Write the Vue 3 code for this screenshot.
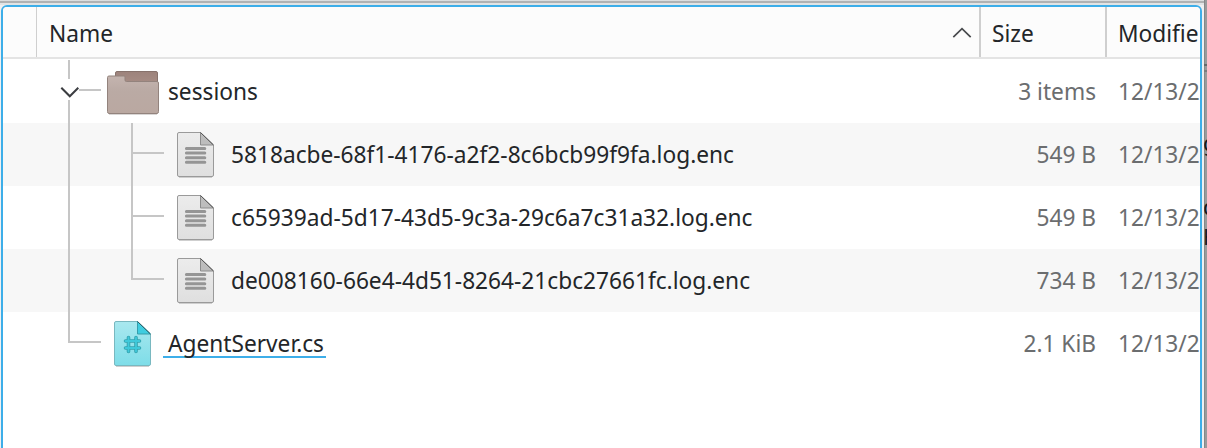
<script setup>
const rows = [
  { kind: 'folder', name: 'sessions', size: '3 items' },
  { kind: 'text', name: '5818acbe-68f1-4176-a2f2-8c6bcb99f9fa.log.enc', size: '549 B' },
  { kind: 'text', name: 'c65939ad-5d17-43d5-9c3a-29c6a7c31a32.log.enc', size: '549 B' },
  { kind: 'text', name: 'de008160-66e4-4d51-8264-21cbc27661fc.log.enc', size: '734 B', last: true },
  { kind: 'code', name: 'AgentServer.cs', size: '2.1 KiB' },
]
</script>

<template>
  <div class="window">
    <main class="panel">
      <header class="head">
        <div class="cell gutter"></div>
        <div class="cell name-head">
          <span>Name</span>
          <svg class="sort" width="20" height="12" viewBox="0 0 20 12"><path d="M1.3 10.2 10 1.6l8.7 8.6" /></svg>
        </div>
        <div class="cell size-head">Size</div>
        <div class="cell mod-head">Modifie</div>
      </header>
      <section class="rows">
        <div v-for="row in rows" :key="row.name" class="row" :class="row.kind">
          <svg v-if="row.kind === 'folder'" class="tree" width="104" height="63">
            <path class="line" d="M66 0v19M66 40v23M76 30h22" />
            <path class="chevron" d="M58.3 27.8 66.8 36.3l8.5-8.5" />
          </svg>
          <svg v-else-if="row.kind === 'text'" class="tree" width="174" height="63">
            <path class="line" d="M66 0v63" />
            <path class="line" :d="row.last ? 'M129 0v30h32' : 'M129 0v63M130 30h31'" />
          </svg>
          <svg v-else class="tree" width="111" height="63">
            <path class="line" d="M66 0v30h32" />
          </svg>

          <svg v-if="row.kind === 'folder'" class="icon" width="61" height="63">
            <defs>
              <linearGradient id="front" x2="0" y2="1"><stop stop-color="#c4b4af" /><stop offset=".4" stop-color="#baaaa4" /><stop offset="1" stop-color="#baa8a1" /></linearGradient>
              <linearGradient id="back" x2="0" y2="1"><stop stop-color="#9d837c" /><stop offset="1" stop-color="#a78d85" /></linearGradient>
            </defs>
            <path d="M2 54.2h48" stroke="#c9c4c2" stroke-width="1" />
            <path d="M8.5 22V13Q8.5 11.5 10 11.5H49Q50.5 11.5 50.5 13V24z" fill="url(#back)" stroke="#87726c" />
            <path d="M.5 17.5Q.5 16 2 16H17Q18 16 18 17V20Q18 21.5 19.5 21.5H50Q51.5 21.5 51.5 23V51.5Q51.5 53.5 50 53.5H2Q.5 53.5.5 51.500z" fill="url(#front)" stroke="#93837d" />
          </svg>
          <svg v-else class="icon" width="54" height="63">
            <defs>
              <linearGradient id="paper" x2="0" y2="1"><stop stop-color="#ececec" /><stop offset="1" stop-color="#dfdfdf" /></linearGradient>
              <linearGradient id="cyan" x2="0" y2="1"><stop stop-color="#a9e8ef" /><stop offset="1" stop-color="#7edde8" /></linearGradient>
            </defs>
            <path class="shade" d="M2 54.3h33" />
            <path class="page" d="M2 9.5H23.5L36.5 22.5V52q0 1.5-1.5 1.5H2Q.5 53.5.5 52V11Q.5 9.5 2 9.5z" />
            <path class="fold" d="M23.5 9.5 36.5 22H23.5z" />
            <path class="edge" d="M23.5 9.5 36.5 22" />
            <path v-if="row.kind === 'text'" class="text-lines" d="M9.4 25.5h18.400M9.4 30.1h18.400M9.4 34.700h18.400M9.4 39.300h18.400" />
            <template v-else>
              <path class="hash-edge" d="M14.5 25.5v14M22 25.500v14M11.500 29h14M11.500 36h14" />
              <path class="hash" d="M14.5 25.5v14M22 25.500v14M11.500 29h14M11.500 36h14" />
            </template>
          </svg>
          <div class="label"><span :class="{ current: row.kind === 'code' }">{{ row.name }}</span></div>
          <div class="size">{{ row.size }}</div>
          <div class="date">12/13/2</div>
        </div>
      </section>
    </main>
    <aside class="behind">
      <span class="bar"></span>
      <span class="glyph g1">g</span>
      <span class="glyph g2">d</span>
      <span class="glyph g3">H</span>
    </aside>
  </div>
</template>

<style>
body { overflow: hidden; }
</style>

<style scoped>
.window {
  position: relative;
  box-sizing: border-box;
  width: 1207px;
  height: 448px;
  padding: 5px 0 0 1px;
  overflow: hidden;
  background: linear-gradient(#dcdedf 0 1px, #b0b2b3 1px 3px, #e1e4e5 3px 5px, #eff0f1 5px);
  font: 22.7px/32px "Noto Sans", sans-serif;
  color: #232629;
}
.panel {
  box-sizing: border-box;
  width: 1201px;
  height: 450px;
  border: 2px solid #3daee9;
  border-radius: 6px;
  overflow: hidden;
  background: #fff;
}
.head { display: flex; height: 52px; background: #fcfcfc; box-sizing: border-box; border-bottom: 2px solid #e4e4e4; }
.cell { box-sizing: border-box; flex: none; height: 50px; padding-top: 11px; }
.gutter { width: 34px; border-right: 1px solid #cfcfcf; }
.name-head { width: 944px; display: flex; justify-content: space-between; padding-left: 12px; padding-right: 7px; border-right: 2px solid #cfcfcf; }
.sort { margin-top: 9px; fill: none; stroke: #4a4c4f; stroke-width: 1.7; }
.size-head { width: 126px; padding-left: 11px; border-right: 2px solid #cfcfcf; }
.mod-head { width: 93px; padding-left: 11px; }
.rows { padding-top: 1px; }
.row { display: flex; height: 63px; }
.row:nth-child(even) { background: #f7f7f7; }
.tree, .icon { flex: none; display: block; }
.line { fill: none; stroke: #c6c6c6; stroke-width: 2; }
.chevron { fill: none; stroke: #3b3d41; stroke-width: 2; }
.label { flex: 1; padding-top: 16px; white-space: pre; }
.size { flex: none; padding-top: 16px; color: #6b6d6f; }
.date { flex: none; box-sizing: border-box; width: 104px; padding: 16px 0 0 22px; color: #6b6d6f; }
.current { display: inline-block; height: 28px; margin-left: -5px; padding: 0 2px 0 5px; border-bottom: 2px solid #3daee9; }
.page { fill: url(#paper); stroke: #9a9a9a; }
.fold { fill: #bdbdbd; stroke: #8c8c8c; }
.edge { stroke: #555; }
.shade { stroke: #c4c4c4; }
.text-lines { fill: none; stroke: #959595; stroke-width: 3; stroke-linecap: round; }
.code .page { fill: url(#cyan); stroke: #79b8c0; }
.code .fold { fill: #3fcde0; stroke: #369eac; }
.code .edge { stroke: #2a5960; }
.hash-edge { fill: none; stroke: #35a3b0; stroke-width: 3.6; stroke-linecap: round; }
.hash { fill: none; stroke: #3fc9da; stroke-width: 1.8; stroke-linecap: round; }
.behind { position: absolute; left: 1204px; top: 0; width: 3px; height: 448px; overflow: hidden; background: linear-gradient(90deg, #858789 0 1px, #999b9c 1px); }
.bar { position: absolute; top: 64px; left: 0; width: 3px; height: 8px; border-top: 2px solid #66686a; border-bottom: 2px solid #7a7c7e; box-sizing: border-box; }
.glyph { position: absolute; left: -1px; font-size: 22px; color: #17191b; }
.g1 { top: 126px; }
.g2 { top: 190px; }
.g3 { top: 220px; }
</style>
